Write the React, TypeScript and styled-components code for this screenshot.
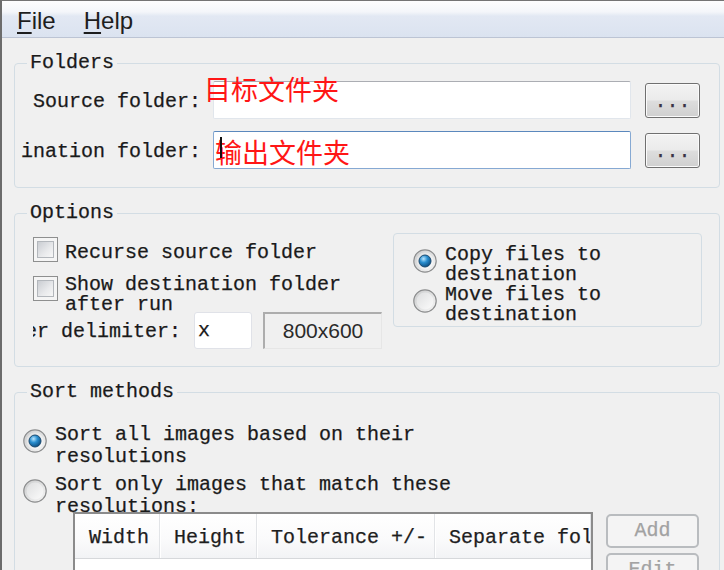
import React, { useId } from 'react';
import styled, { createGlobalStyle, css } from 'styled-components';

const GlobalStyle = createGlobalStyle`
  html, body {
    margin: 0;
    padding: 0;
  }
  body {
    background: #f0f0f0;
    font-family: 'Liberation Mono', 'DejaVu Sans Mono', monospace;
  }
`;

// the old mono face sits a little lower in its line than Liberation Mono
const lowerText = css`
  padding-top: 2px;
  margin-bottom: -2px;
`;

const RadioMark = ({ checked }: { checked?: boolean }) => {
  const id = useId().replace(/:/g, '');
  return (
    <RadioSvg width='24' height='24' viewBox='0 0 24 24'>
      <defs>
        <linearGradient id={`ro${id}`} x1='0' y1='0' x2='1' y2='1'>
          <stop offset='0' stopColor='#c9cacb' />
          <stop offset='1' stopColor='#f7f7f7' />
        </linearGradient>
        <linearGradient id={`ri${id}`} x1='0' y1='0' x2='1' y2='1'>
          <stop offset='0' stopColor='#dedfe0' />
          <stop offset='1' stopColor='#fbfbfb' />
        </linearGradient>
        <radialGradient id={`rd${id}`} cx='0.38' cy='0.32' r='0.7'>
          <stop offset='0' stopColor='#b9e6ff' />
          <stop offset='0.45' stopColor='#2a8fd0' />
          <stop offset='1' stopColor='#0c4d80' />
        </radialGradient>
      </defs>
      <circle cx='12' cy='12' r='11.2' fill={`url(#ro${id})`} stroke='#8c8d8e' strokeWidth='1.2' />
      <circle cx='12' cy='12' r='8.4' fill={`url(#ri${id})`} />
      {checked && (
        <circle cx='12' cy='12' r='6' fill={`url(#rd${id})`} stroke='#1b4a70' strokeWidth='1' />
      )}
    </RadioSvg>
  );
};

const App = () => {
  return (
    <>
      <GlobalStyle />
      <Window>
        <MenuBar>
          <MenuItem>
            <Mnemonic>F</Mnemonic>ile
          </MenuItem>
          <MenuItem>
            <Mnemonic>H</Mnemonic>elp
          </MenuItem>
        </MenuBar>

        <Body>
          <GroupBox>
            <Legend>Folders</Legend>
            <FolderRows>
              <FolderRow>
                <ClipLabel $width={180} $gap={12} $nudge={4}>
                  <span>Source folder:</span>
                </ClipLabel>
                <TextField>
                  <Annotation $left={-10} $top={-7}>目标文件夹</Annotation>
                </TextField>
                <BrowseButton>...</BrowseButton>
              </FolderRow>
              <FolderRow>
                <ClipLabel $width={180} $gap={12} $nudge={4}>
                  <span>Destination folder:</span>
                </ClipLabel>
                <TextField $focused>
                  <Annotation $left={1} $top={6}>输出文件夹</Annotation>
                  <Caret />
                </TextField>
                <BrowseButton>...</BrowseButton>
              </FolderRow>
            </FolderRows>
          </GroupBox>

          <GroupBox>
            <Legend>Options</Legend>
            <OptionsBody>
              <LeftColumn>
                <CheckRow $mt={0}>
                  <CheckBox $offset={0} />
                  <CheckText $offset={4}>Recurse source folder</CheckText>
                </CheckRow>
                <CheckRow $mt={11}>
                  <CheckBox $offset={3} />
                  <CheckText $offset={0}>Show destination folder after run</CheckText>
                </CheckRow>
                <DelimRow>
                  <ClipLabel $width={148} $gap={13} $nudge={2}>
                    <span>Folder delimiter:</span>
                  </ClipLabel>
                  <SmallInput>x</SmallInput>
                  <PreviewBox>800x600</PreviewBox>
                </DelimRow>
              </LeftColumn>
              <RadioBox>
                <RadioRow $offset={6} $gap={0}>
                  <RadioMark checked />
                  <RadioText $lh={20} $width={250}>Copy files to destination</RadioText>
                </RadioRow>
                <RadioRow $offset={6} $gap={0}>
                  <RadioMark />
                  <RadioText $lh={20} $width={250}>Move files to destination</RadioText>
                </RadioRow>
              </RadioBox>
            </OptionsBody>
          </GroupBox>

          <GroupBox>
            <Legend>Sort methods</Legend>
            <SortBody>
              <RadioRow $offset={7} $gap={0}>
                <RadioMark checked />
                <RadioText $lh={22} $width={440}>Sort all images based on their resolutions</RadioText>
              </RadioRow>
              <RadioRow $offset={7} $gap={6}>
                <RadioMark />
                <RadioText $lh={22} $width={440}>
                  Sort only images that match these resolutions:
                </RadioText>
              </RadioRow>
              <TableArea>
                <ListView>
                  <ListHeader>
                    <HeaderCell $width={85}>Width</HeaderCell>
                    <HeaderCell $width={97}>Height</HeaderCell>
                    <HeaderCell $width={178}>Tolerance +/-</HeaderCell>
                    <HeaderCell>Separate folder</HeaderCell>
                  </ListHeader>
                </ListView>
                <SideButtons>
                  <SideButton disabled>Add</SideButton>
                  <SideButton disabled>Edit</SideButton>
                </SideButtons>
              </TableArea>
            </SortBody>
          </GroupBox>
        </Body>
      </Window>
    </>
  );
};

const Window = styled.div`
  width: 724px;
  height: 570px;
  box-sizing: border-box;
  overflow: hidden;
  background: #f0f0f0;
  border-top: 1px solid #747474;
  border-left: 2px solid #6c6c6c;
  display: flex;
  flex-direction: column;
  color: #1a1a1a;
`;

const MenuBar = styled.div`
  flex-shrink: 0;
  height: 37px;
  box-sizing: border-box;
  padding: 8px 0 0 15px;
  display: flex;
  align-items: flex-start;
  gap: 28px;
  border-bottom: 1px solid #bcc4d4;
  background: linear-gradient(
    to bottom,
    #fdfdfe 0%,
    #f4f6fa 30%,
    #e2e8f3 42%,
    #dbe3f0 100%
  );
  font-family: 'Liberation Sans', Arial, sans-serif;
  font-size: 24px;
  line-height: 24px;
`;

const MenuItem = styled.span`
  color: #1e1e1e;
`;

const Mnemonic = styled.span`
  text-decoration: underline;
  text-decoration-thickness: 2px;
  text-underline-offset: 3px;
`;

const Body = styled.div`
  padding: 15px 4px 0 12px;
  display: flex;
  flex-direction: column;
  gap: 15px;
  -webkit-text-stroke: 0.25px currentColor;
`;

const GroupBox = styled.fieldset`
  margin: 0;
  padding: 0;
  min-width: 0;
  border: 1px solid #d3dde4;
  border-radius: 4px;
`;

const Legend = styled.legend`
  margin-left: 12px;
  padding: 0 3px;
  font-size: 20px;
  line-height: 20px;
  color: #1a1a1a;
`;

const FolderRows = styled.div`
  display: flex;
  flex-direction: column;
  gap: 12px;
  padding: 8px 0 18px 6px;
`;

const FolderRow = styled.div`
  display: flex;
  align-items: center;
  height: 38px;
`;

const ClipLabel = styled.div<{ $width: number; $gap: number; $nudge: number }>`
  width: ${(p) => p.$width}px;
  margin-right: ${(p) => p.$gap}px;
  padding-top: ${(p) => p.$nudge}px;
  flex-shrink: 0;
  overflow: hidden;
  display: flex;
  justify-content: flex-end;
  white-space: nowrap;
  font-size: 20px;
  line-height: 22px;

  span {
    flex-shrink: 0;
  }
`;

const TextField = styled.div<{ $focused?: boolean }>`
  position: relative;
  width: 418px;
  height: 38px;
  box-sizing: border-box;
  background: #fff;
  border-radius: 2px;
  border: 1px solid ${(p) => (p.$focused ? '#86a9d3' : '#e1e6ec')};
  border-top-color: ${(p) => (p.$focused ? '#5b88bd' : '#abadb3')};
`;

const Annotation = styled.span<{ $left: number; $top: number }>`
  position: absolute;
  left: ${(p) => p.$left}px;
  top: ${(p) => p.$top}px;
  font-family: 'Noto Sans CJK SC', 'Noto Sans', sans-serif;
  font-size: 27px;
  line-height: 1;
  color: #ff1616;
  white-space: nowrap;
  -webkit-text-stroke: 0;
`;

const Caret = styled.span`
  position: absolute;
  left: 6px;
  top: 5px;
  width: 2px;
  height: 21px;
  background: #111;
`;

const BrowseButton = styled.button`
  margin-left: 14px;
  width: 55px;
  height: 35px;
  box-sizing: border-box;
  padding: 0;
  border: 1px solid #707070;
  border-radius: 3px;
  box-shadow: inset 0 0 0 1px #fbfbfb;
  background: linear-gradient(to bottom, #f3f3f3 0%, #ebebeb 48%, #dddddd 52%, #d0d0d0 100%);
  font-family: 'Liberation Mono', monospace;
  font-size: 20px;
  line-height: 35px;
  color: #3a3246;
`;

const OptionsBody = styled.div`
  display: flex;
  align-items: flex-start;
  gap: 11px;
  padding: 10px 0 17px 18px;
`;

const LeftColumn = styled.div`
  width: 349px;
  padding-top: 4px;
  display: flex;
  flex-direction: column;
`;

const CheckRow = styled.div<{ $mt: number }>`
  display: flex;
  align-items: flex-start;
  gap: 7px;
  margin-top: ${(p) => p.$mt}px;
`;

const CheckBox = styled.span<{ $offset: number }>`
  flex-shrink: 0;
  width: 25px;
  height: 25px;
  box-sizing: border-box;
  margin-top: ${(p) => p.$offset}px;
  padding: 3px;
  display: flex;
  border: 1px solid #8e8f8f;
  background: #f5f5f5;

  &::after {
    content: '';
    flex: 1;
    border: 1px solid #b3b7bc;
    background: linear-gradient(135deg, #cacdd2 0%, #e9eaec 60%, #f7f7f7 100%);
  }
`;

const CheckText = styled.span<{ $offset: number }>`
  margin-top: ${(p) => p.$offset}px;
  font-size: 20px;
  line-height: 20px;
  ${lowerText}
`;

const DelimRow = styled.div`
  margin-top: -1px;
  display: flex;
  align-items: center;
  height: 37px;
`;

const SmallInput = styled.div`
  width: 58px;
  height: 37px;
  box-sizing: border-box;
  padding: 2px 0 0 3px;
  background: #fff;
  border: 1px solid #e0e2e8;
  border-radius: 3px;
  font-size: 20px;
  line-height: 31px;
`;

const PreviewBox = styled.div`
  margin-left: 11px;
  width: 119px;
  height: 37px;
  box-sizing: border-box;
  border-top: 2px solid #adadad;
  border-left: 2px solid #adadad;
  border-right: 1px solid #e6e6e6;
  border-bottom: 1px solid #e6e6e6;
  background: #f0f0f0;
  text-align: center;
  font-family: 'Liberation Sans', Arial, sans-serif;
  font-size: 21px;
  line-height: 33px;
  color: #2a2a2a;
  -webkit-text-stroke: 0;
`;

const RadioBox = styled.div`
  width: 309px;
  height: 94px;
  box-sizing: border-box;
  padding: 9px 0 0 19px;
  border: 1px solid #d3dde4;
  border-radius: 4px;
`;

const RadioRow = styled.div<{ $offset: number; $gap: number }>`
  display: flex;
  align-items: flex-start;
  gap: 8px;
  margin-top: ${(p) => p.$gap}px;

  svg {
    margin-top: ${(p) => p.$offset}px;
  }
`;

const RadioSvg = styled.svg`
  flex-shrink: 0;
  display: block;
`;

const RadioText = styled.span<{ $lh: number; $width: number }>`
  width: ${(p) => p.$width}px;
  font-size: 20px;
  line-height: ${(p) => p.$lh}px;
  ${lowerText}
`;

const SortBody = styled.div`
  padding: 20px 0 0 8px;
  display: flex;
  flex-direction: column;
`;

const TableArea = styled.div`
  margin: -4px 0 0 50px;
  display: flex;
  align-items: flex-start;
  gap: 13px;
`;

const ListView = styled.div`
  width: 520px;
  height: 220px;
  box-sizing: border-box;
  border: 2px solid #8b8b8b;
  background: #fff;
  overflow: hidden;
`;

const ListHeader = styled.div`
  display: flex;
  height: 45px;
  box-sizing: border-box;
  border-bottom: 1px solid #d6d8db;
  background: linear-gradient(to bottom, #ffffff 0%, #fafafb 60%, #f2f3f5 100%);
`;

const HeaderCell = styled.div<{ $width?: number }>`
  ${(p) => (p.$width ? `width: ${p.$width}px; flex-shrink: 0;` : 'flex: 1;')}
  box-sizing: border-box;
  padding: 4px 0 0 14px;
  border-right: 1px solid #e2e4e7;
  box-shadow: 1px 0 0 #fff;
  overflow: hidden;
  white-space: nowrap;
  font-size: 20px;
  line-height: 40px;
  color: #1e1e1e;
`;

const SideButtons = styled.div`
  margin-top: 2px;
  display: flex;
  flex-direction: column;
  gap: 5px;
`;

const SideButton = styled.button`
  width: 93px;
  height: 34px;
  box-sizing: border-box;
  padding: 0;
  border: 2px solid #b9bcbf;
  border-radius: 5px;
  background: #f4f4f4;
  font-family: 'Liberation Mono', monospace;
  font-size: 20px;
  line-height: 30px;
  color: #a2a2a2;
  -webkit-text-stroke: 0.25px currentColor;
`;

export default App;
